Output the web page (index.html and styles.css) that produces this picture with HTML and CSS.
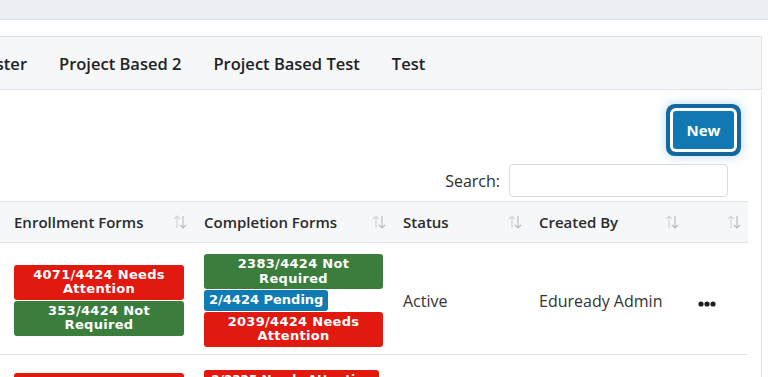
FILE: index.html
```html
<!DOCTYPE html>
<html lang="en">
<head>
    <meta charset="UTF-8">
    <meta name="viewport" content="width=device-width, initial-scale=1.0">
    <title>Programs</title>
    <link rel="stylesheet" href="styles.css">
</head>
<body>
    <div class="topbar"></div>

    <div class="page">
        <!-- Pestañas de programas -->
        <div class="tabs">
            <div class="tab cut"><span>Semester</span></div>
            <div class="tab">Project Based 2</div>
            <div class="tab">Project Based Test</div>
            <div class="tab">Test</div>
        </div>

        <div class="card">
            <div class="toolbar">
                <button class="btn-new" type="button">New</button>
            </div>
            <div class="search-row">
                <label for="search">Search:</label>
                <input id="search" type="text">
            </div>

            <table class="grid">
                <colgroup>
                    <col class="c-enroll">
                    <col class="c-complete">
                    <col class="c-status">
                    <col class="c-created">
                    <col class="c-actions">
                </colgroup>
                <thead>
                    <tr>
                        <th class="first">Enrollment Forms<span class="sort"><svg viewBox="0 0 14 16" width="14" height="16"><path d="M4 14V2M1 5l3-3 3 3" stroke="#d3d6da"/><path d="M10 2v12M7 11l3 3 3-3" stroke="#b9bdc2"/></svg></span></th>
                        <th>Completion Forms<span class="sort"><svg viewBox="0 0 14 16" width="14" height="16"><path d="M4 14V2M1 5l3-3 3 3" stroke="#d3d6da"/><path d="M10 2v12M7 11l3 3 3-3" stroke="#b9bdc2"/></svg></span></th>
                        <th>Status<span class="sort"><svg viewBox="0 0 14 16" width="14" height="16"><path d="M4 14V2M1 5l3-3 3 3" stroke="#d3d6da"/><path d="M10 2v12M7 11l3 3 3-3" stroke="#b9bdc2"/></svg></span></th>
                        <th>Created By<span class="sort"><svg viewBox="0 0 14 16" width="14" height="16"><path d="M4 14V2M1 5l3-3 3 3" stroke="#d3d6da"/><path d="M10 2v12M7 11l3 3 3-3" stroke="#b9bdc2"/></svg></span></th>
                        <th><span class="sort"><svg viewBox="0 0 14 16" width="14" height="16"><path d="M4 14V2M1 5l3-3 3 3" stroke="#d3d6da"/><path d="M10 2v12M7 11l3 3 3-3" stroke="#b9bdc2"/></svg></span></th>
                    </tr>
                </thead>
                <tbody>
                    <tr>
                        <td class="first">
                            <div class="badge red">4071/4424 Needs Attention</div>
                            <div class="badge green">353/4424 Not Required</div>
                        </td>
                        <td>
                            <div class="badge green">2383/4424 Not Required</div>
                            <div class="badge blue">2/4424 Pending</div>
                            <div class="badge red">2039/4424 Needs Attention</div>
                        </td>
                        <td>Active</td>
                        <td>Eduready Admin</td>
                        <td><span class="more"><svg viewBox="0 0 18 6" width="18" height="6"><circle cx="3" cy="3" r="2.6"/><circle cx="9" cy="3" r="2.6"/><circle cx="15" cy="3" r="2.6"/></svg></span></td>
                    </tr>
                    <tr class="next">
                        <td class="first badges">
                            <div class="badge red">1/2325 Needs Attention</div>
                            <div class="badge green">2324/2325 Not Required</div>
                        </td>
                        <td class="badges">
                            <div class="badge red narrow">2/2325 Needs Attention</div>
                            <div class="badge green">2323/2325 Not Required</div>
                            <div class="badge blue">0/2325 Pending</div>
                            <div class="badge green">1/2325 Completed</div>
                        </td>
                        <td>Active</td>
                        <td>Eduready Admin</td>
                        <td><span class="more"><svg viewBox="0 0 18 6" width="18" height="6"><circle cx="3" cy="3" r="2.6"/><circle cx="9" cy="3" r="2.6"/><circle cx="15" cy="3" r="2.6"/></svg></span></td>
                    </tr>
                </tbody>
            </table>
        </div>
    </div>
</body>
</html>
```

FILE: styles.css
```css
/* Base */
body, html {
    margin: 0;
    font-family: "Open Sans", Arial, sans-serif;
    color: #2b2b2b;
    background-color: #ffffff;
    overflow: hidden;
}

/* Barra superior gris */
.topbar {
    height: 19px;
    background-color: #ebeef2;
    border-bottom: 1px solid #dde2e8;
}

.page {
    padding-top: 16px;
    width: 762px;
}

/* Pestañas */
.tabs {
    display: flex;
    height: 52px;
    align-items: center;
    background-color: #f5f7f9;
    border-top: 1px solid #dee3e9;
    border-bottom: 1px solid #dee3e9;
    border-right: 1px solid #dee3e9;
    font-size: 16.5px;
    font-weight: 600;
    color: #222;
}

.tab {
    padding: 0 16px;
    white-space: nowrap;
}

.tab.cut {
    width: 43px;
    box-sizing: border-box;
    display: flex;
    justify-content: flex-end;
    overflow: hidden;
}

/* Tarjeta principal */
.card {
    border-right: 1px solid #dee3e9;
    border-top-right-radius: 5px;
    padding-right: 13px;
}

.toolbar {
    display: flex;
    justify-content: flex-end;
    padding: 21px 0 0 0;
}

.btn-new {
    width: 61px;
    height: 38px;
    margin-right: 14px;
    border: none;
    border-radius: 3px;
    background-color: #1178b3;
    color: #ffffff;
    font-family: inherit;
    font-size: 15px;
    font-weight: 700;
    box-shadow: 0 0 0 3px #ffffff, 0 0 0 7px #13679f, 0 0 10px 8px rgba(17, 120, 179, 0.25);
}

.search-row {
    display: flex;
    justify-content: flex-end;
    align-items: center;
    margin-top: 15px;
    padding-right: 20px;
    font-size: 16px;
}

.search-row label {
    margin-right: 9px;
}

.search-row input {
    width: 219px;
    height: 33px;
    box-sizing: border-box;
    border: 1px solid #d5dbe2;
    border-radius: 4px;
}

/* Tabla */
.grid {
    width: 748px;
    margin-top: 4px;
    border-collapse: collapse;
    table-layout: fixed;
    font-size: 16px;
}

.c-enroll { width: 194px; }
.c-complete { width: 199px; }
.c-status { width: 136px; }
.c-created { width: 157px; }
.c-actions { width: 62px; }

.grid th {
    position: relative;
    height: 40px;
    padding: 0 10px;
    text-align: left;
    font-size: 15px;
    font-weight: 600;
    background-color: #f5f7f9;
    border-top: 1px solid #dee3e9;
    border-bottom: 1px solid #dee3e9;
    white-space: nowrap;
}

.grid th.first,
.grid td.first {
    padding-left: 14px;
}

.sort {
    position: absolute;
    right: 7px;
    top: 12px;
    line-height: 0;
}

.sort path {
    fill: none;
    stroke-width: 1.2;
}

.grid td {
    padding: 11px 10px 6px 10px;
    border-bottom: 1px solid #dee3e9;
    vertical-align: middle;
    color: #333;
}

/* Segunda fila: las etiquetas arrancan arriba, el resto queda centrado */
.grid tr.next td.badges {
    padding-top: 15px;
    vertical-align: top;
}

.grid tr.next td.first {
    padding-top: 18px;
}

/* Etiquetas de estado */
.badge {
    display: block;
    padding: 3px 6px;
    margin-bottom: 1px;
    border-radius: 3px;
    color: #ffffff;
    font-family: "DejaVu Sans", "Open Sans", sans-serif;
    font-size: 13px;
    font-weight: 700;
    letter-spacing: 0.3px;
    line-height: 14.5px;
    text-align: center;
}

.badge.red { background-color: #e2190f; }
.badge.green { background-color: #3a7d3c; }
.badge.blue {
    width: fit-content;
    background-color: #0f7ab3;
    padding: 3px 5px;
    letter-spacing: 0;
}

.badge.narrow {
    width: 171px;
    padding: 3px 2px;
    font-size: 12px;
    letter-spacing: 0;
}

.more {
    display: inline-block;
    margin-left: 2px;
    line-height: 0;
    fill: #1e1e1e;
}
```
